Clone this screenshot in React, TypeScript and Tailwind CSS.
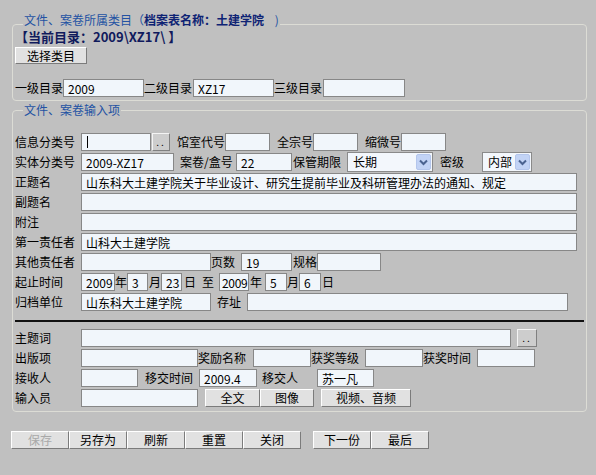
import React from 'react';

type BoxProps = { className?: string; value?: string };

// text box look of the old archive form
const Field: React.FC<BoxProps> = ({ className = '', value = '' }) => (
  <input
    readOnly
    value={value}
    className={`h-[18px] shrink-0 border border-[#878787] bg-[#f1f6fb] pl-[4px] text-[12px] leading-[16px] text-black outline-none ${className}`}
  />
);

const Btn: React.FC<{ className?: string; disabled?: boolean; children: React.ReactNode }> = ({
  className = '',
  disabled,
  children,
}) => (
  <button
    type="button"
    className={`flex h-[18px] shrink-0 items-center justify-center border border-t-white border-l-white border-r-[#7b7b7b] border-b-[#7b7b7b] bg-[#e1e1e1] text-[12px] leading-none ${
      disabled ? 'text-[#a9a9a9]' : 'text-black'
    } ${className}`}
  >
    {children}
  </button>
);

const Dots: React.FC<{ className?: string }> = ({ className = '' }) => (
  <button
    type="button"
    className={`flex h-[18px] shrink-0 items-end justify-center border border-t-[#f4f4f4] border-l-[#f4f4f4] border-r-[#808080] border-b-[#808080] bg-[#cdcdcd] pb-[3px] text-[10px] leading-none tracking-[2px] text-black ${className}`}
  >
    ..
  </button>
);

const Combo: React.FC<{ className?: string; value: string }> = ({ className = '', value }) => (
  <div
    className={`flex h-[20px] shrink-0 items-center justify-between border border-[#8a8a8a] bg-[#f3f7fc] pl-[5px] pr-[1px] ${className}`}
  >
    <span>{value}</span>
    <span className="flex h-[16px] w-[15px] items-center justify-center rounded-[2px] border border-[#b4c6ec] bg-[#c2d3f5]">
      <svg width="9" height="7" viewBox="0 0 9 7">
        <path d="M1 1.5 L4.5 5 L8 1.5" fill="none" stroke="#4b6390" strokeWidth="2" />
      </svg>
    </span>
  </div>
);

const Lbl: React.FC<{ className?: string; children: React.ReactNode }> = ({ className = '', children }) => (
  <span className={`shrink-0 whitespace-nowrap ${className}`}>{children}</span>
);

const Row: React.FC<{ children: React.ReactNode }> = ({ children }) => (
  <div className="flex h-[20px] items-center">{children}</div>
);

const WIDE = ['正题名', '副题名', '附注', '第一责任者'];
const WIDE_VALUES: Record<string, string> = {
  正题名: '山东科大土建学院关于毕业设计、研究生提前毕业及科研管理办法的通知、规定',
  第一责任者: '山科大土建学院',
};

export default function App() {
  return (
    <div className="h-[475px] w-[596px] overflow-hidden bg-[#c0c0c0] pt-[12px] font-['Noto_Sans_CJK_SC','Noto_Sans',sans-serif] text-[12px] leading-[16px] text-black">
      {/* 所属类目 */}
      <fieldset className="ml-[12px] w-[575px] rounded-[4px] border border-[#dcdcd5] px-[2px] pb-[3px]">
        <legend className="ml-[8px] px-[1px] pb-[8px] leading-[16px] text-[#2352a3]">
          <span>
            文件、案卷所属类目（<b className="text-[#0e2374]">档案表名称：土建学院</b>
            {'\u00a0\u00a0\u00a0\u00a0)'}
          </span>
        </legend>
        <div className="-mt-[6px] text-[13px] font-bold leading-[14px] text-[#101a5c]">{'【当前目录：2009\\XZ17\\ 】'}</div>
        <Btn className="mt-[3px] !h-[17px] w-[72px]">选择类目</Btn>
        <div className="mt-[15px] flex h-[18px] items-center">
          <Lbl className="w-[48px]">一级目录</Lbl>
          <Field className="w-[81px]" value="2009" />
          <Lbl className="w-[49px]">二级目录</Lbl>
          <Field className="w-[81px]" value="XZ17" />
          <Lbl className="w-[49px]">三级目录</Lbl>
          <Field className="w-[82px]" />
        </div>
      </fieldset>

      {/* 输入项 */}
      <fieldset className="mt-[1px] ml-[12px] w-[575px] rounded-[4px] border border-[#dcdcd5] px-[2px] pb-[3px]">
        <legend className="ml-[8px] px-[1px] leading-[16px] text-[#2352a3]">文件、案卷输入项</legend>

        <div className="mt-[14px]">
          <Row>
            <Lbl className="w-[66px]">信息分类号</Lbl>
            <div className="relative">
              <Field className="w-[70px]" />
              <span className="absolute top-[3px] left-[6px] h-[12px] w-[1px] bg-black" />
            </div>
            <Dots className="ml-[1px] w-[18px]" />
            <Lbl className="ml-[7px] w-[48px]">馆室代号</Lbl>
            <Field className="w-[45px]" />
            <Lbl className="ml-[7px] w-[36px]">全宗号</Lbl>
            <Field className="w-[45px]" />
            <Lbl className="ml-[7px] w-[36px]">缩微号</Lbl>
            <Field className="w-[45px]" />
          </Row>
          <Row>
            <Lbl className="w-[66px]">实体分类号</Lbl>
            <Field className="w-[93px]" value="2009-XZ17" />
            <Lbl className="ml-[6px] w-[56px]">案卷/盒号</Lbl>
            <Field className="w-[56px]" value="22" />
            <Lbl className="ml-[1px] w-[54px]">保管期限</Lbl>
            <Combo className="w-[86px]" value="长期" />
            <Lbl className="ml-[7px] w-[42px]">密级</Lbl>
            <Combo className="w-[50px]" value="内部" />
          </Row>
          {WIDE.map((name) => (
            <Row key={name}>
              <Lbl className="w-[66px]">{name}</Lbl>
              <Field className="w-[496px]" value={WIDE_VALUES[name] ?? ''} />
            </Row>
          ))}
          <Row>
            <Lbl className="w-[66px]">其他责任者</Lbl>
            <Field className="w-[130px]" />
            <Lbl className="w-[30px]">页数</Lbl>
            <Field className="w-[51px]" value="19" />
            <Lbl className="ml-[1px] w-[24px]">规格</Lbl>
            <Field className="w-[64px]" />
          </Row>
          <Row>
            <Lbl className="w-[66px]">起止时间</Lbl>
            <Field className="w-[34px]" value="2009" />
            <Lbl className="w-[12px]">年</Lbl>
            <Field className="w-[21px]" value="3" />
            <Lbl className="w-[13px] pl-[1px]">月</Lbl>
            <Field className="w-[21px]" value="23" />
            <Lbl className="w-[37px] pl-[2px]">
              日<span className="ml-[6px]">至</span>
            </Lbl>
            <Field className="w-[30px] !pl-[2px] tracking-[-0.3px]" value="2009" />
            <Lbl className="w-[16px] pl-[1px]">年</Lbl>
            <Field className="w-[22px]" value="5" />
            <Lbl className="w-[12px]">月</Lbl>
            <Field className="w-[22px]" value="6" />
            <Lbl className="pl-[1px]">日</Lbl>
          </Row>
          <Row>
            <Lbl className="w-[66px]">归档单位</Lbl>
            <Field className="w-[130px]" value="山东科大土建学院" />
            <Lbl className="ml-[6px] w-[30px]">存址</Lbl>
            <Field className="w-[321px]" />
          </Row>
        </div>

        <div className="mt-[8px] h-[2px] bg-[#111111]" />

        <div className="mt-[6px]">
          <Row>
            <Lbl className="w-[66px]">主题词</Lbl>
            <Field className="w-[430px]" />
            <Dots className="ml-[6px] w-[20px]" />
          </Row>
          <Row>
            <Lbl className="w-[66px]">出版项</Lbl>
            <Field className="w-[117px]" />
            <Lbl className="w-[55px]">奖励名称</Lbl>
            <Field className="w-[58px]" />
            <Lbl className="w-[54px]">获奖等级</Lbl>
            <Field className="w-[58px]" />
            <Lbl className="w-[54px]">获奖时间</Lbl>
            <Field className="w-[58px]" />
          </Row>
          <Row>
            <Lbl className="w-[66px]">接收人</Lbl>
            <Field className="w-[57px]" />
            <Lbl className="ml-[7px] w-[54px]">移交时间</Lbl>
            <Field className="w-[58px]" value="2009.4" />
            <Lbl className="ml-[5px] w-[55px]">移交人</Lbl>
            <Field className="w-[57px]" value="苏一凡" />
          </Row>
          <Row>
            <Lbl className="w-[66px]">输入员</Lbl>
            <Field className="w-[117px]" />
            <Btn className="ml-[7px] w-[55px]">全文</Btn>
            <Btn className="w-[54px]">图像</Btn>
            <Btn className="ml-[7px] w-[90px]">视频、音频</Btn>
          </Row>
        </div>
      </fieldset>

      {/* 底部操作 */}
      <div className="mt-[19px] ml-[11px] flex">
        <Btn className="w-[58px]" disabled>
          保存
        </Btn>
        <Btn className="w-[58px]">另存为</Btn>
        <Btn className="w-[58px]">刷新</Btn>
        <Btn className="w-[58px]">重置</Btn>
        <Btn className="w-[58px]">关闭</Btn>
        <Btn className="ml-[12px] w-[58px]">下一份</Btn>
        <Btn className="w-[58px]">最后</Btn>
      </div>
    </div>
  );
}
